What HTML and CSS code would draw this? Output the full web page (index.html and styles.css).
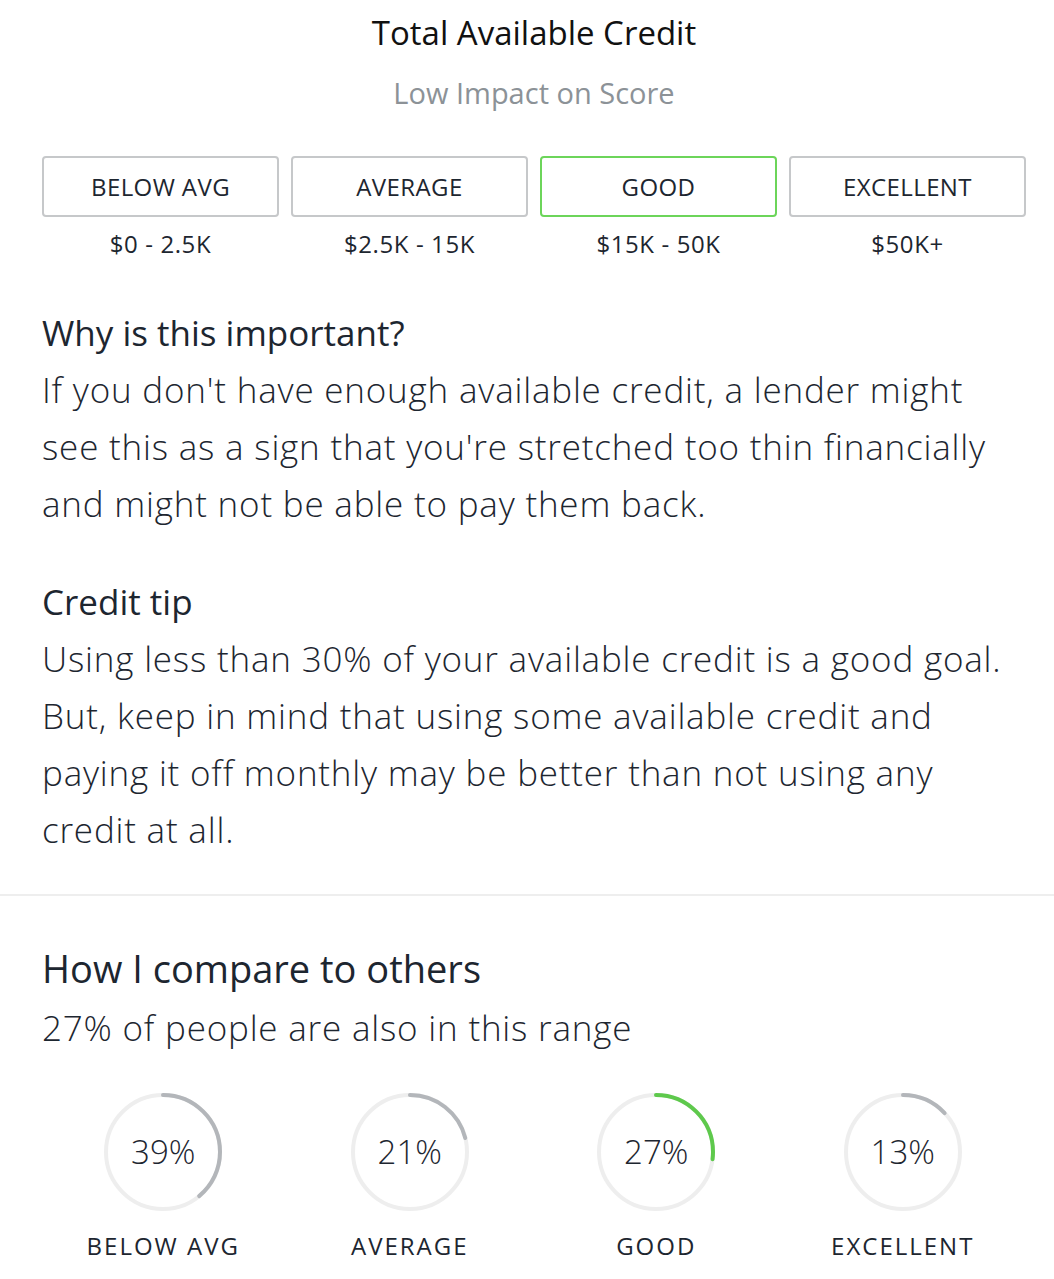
FILE: index.html
```html
<!doctype html>
<html>
<head>
<meta charset="utf-8">
<title>Total Available Credit</title>
<link rel="stylesheet" href="styles.css">
</head>
<body>
	<div class="page">
		<div class="head">
			<h1 class="title">Total Available Credit</h1>
			<div class="impact">Low Impact on Score</div>
		</div>

		<div class="ranges">
			<div class="range">
				<div class="range-box">BELOW AVG</div>
				<div class="range-val">$0 - 2.5K</div>
			</div>
			<div class="range">
				<div class="range-box">AVERAGE</div>
				<div class="range-val">$2.5K - 15K</div>
			</div>
			<div class="range">
				<div class="range-box active">GOOD</div>
				<div class="range-val">$15K - 50K</div>
			</div>
			<div class="range">
				<div class="range-box">EXCELLENT</div>
				<div class="range-val">$50K+</div>
			</div>
		</div>

		<div class="block">
			<h2 class="block-title">Why is this important?</h2>
			<p class="block-text">If you don't have enough available credit, a lender might see this as a sign that you're stretched too thin financially and might not be able to pay them back.</p>
		</div>

		<div class="block">
			<h2 class="block-title">Credit tip</h2>
			<p class="block-text">Using less than 30% of your available credit is a good goal. But, keep in mind that using some available credit and paying it off monthly may be better than not using any credit at all.</p>
		</div>
	</div>

	<hr class="divider">

	<div class="page">
		<h2 class="compare-title">How I compare to others</h2>
		<p class="compare-sub">27% of people are also in this range</p>

		<div class="rings">
			<div class="ring">
				<div class="ring-chart">
					<svg width="122" height="122" viewBox="0 0 122 122">
						<circle cx="61" cy="61" r="57" class="track"/>
						<circle cx="61" cy="61" r="57" class="arc" stroke-dasharray="139.7 400" transform="rotate(-90 61 61)"/>
					</svg>
					<span class="ring-num">39%</span>
				</div>
				<div class="ring-label">BELOW AVG</div>
			</div>
			<div class="ring">
				<div class="ring-chart">
					<svg width="122" height="122" viewBox="0 0 122 122">
						<circle cx="61" cy="61" r="57" class="track"/>
						<circle cx="61" cy="61" r="57" class="arc" stroke-dasharray="75.2 400" transform="rotate(-90 61 61)"/>
					</svg>
					<span class="ring-num">21%</span>
				</div>
				<div class="ring-label">AVERAGE</div>
			</div>
			<div class="ring">
				<div class="ring-chart">
					<svg width="122" height="122" viewBox="0 0 122 122">
						<circle cx="61" cy="61" r="57" class="track"/>
						<circle cx="61" cy="61" r="57" class="arc green" stroke-dasharray="96.7 400" transform="rotate(-90 61 61)"/>
					</svg>
					<span class="ring-num">27%</span>
				</div>
				<div class="ring-label">GOOD</div>
			</div>
			<div class="ring">
				<div class="ring-chart">
					<svg width="122" height="122" viewBox="0 0 122 122">
						<circle cx="61" cy="61" r="57" class="track"/>
						<circle cx="61" cy="61" r="57" class="arc" stroke-dasharray="46.6 400" transform="rotate(-90 61 61)"/>
					</svg>
					<span class="ring-num">13%</span>
				</div>
				<div class="ring-label">EXCELLENT</div>
			</div>
		</div>
	</div>
</body>
</html>
```

FILE: styles.css
```css
*{
	margin: 0;
	padding: 0;
	box-sizing: border-box;
}
body{
	background: #fff;
	color: #1d2630;
	font-family: "Open Sans", "Noto Sans", sans-serif;
	font-weight: 300;
}
.page{
	padding: 0 28px 0 42px;
}
.head{
	text-align: center;
	padding-top: 13px;
}
.title{
	font-size: 33px;
	font-weight: 400;
	line-height: 40px;
	color: #111;
}
.impact{
	margin-top: 22px;
	font-size: 29px;
	font-weight: 400;
	line-height: 36px;
	color: #8c9297;
}
.ranges{
	display: grid;
	grid-template-columns: repeat(4, 1fr);
	gap: 12px;
	margin-top: 45px;
}
.range{
	text-align: center;
}
.range-box{
	height: 61px;
	border: 2px solid #c6c8ca;
	border-radius: 4px;
	font-size: 24px;
	font-weight: 400;
	letter-spacing: 0.4px;
	line-height: 57px;
	color: #1d2630;
}
.range-box.active{
	border-color: #6cd55a;
}
.range-val{
	margin-top: 12px;
	font-size: 24px;
	font-weight: 400;
	letter-spacing: 0.6px;
	line-height: 30px;
	color: #1d2630;
}
.block{
	margin-top: 45px;
}
.block + .block{
	margin-top: 41px;
}
.block-title{
	font-size: 35px;
	font-weight: 400;
	line-height: 57px;
	color: #1d2630;
}
.block-text{
	font-size: 35px;
	letter-spacing: 0.8px;
	line-height: 57px;
	color: #1d2630;
}
.divider{
	border: none;
	height: 2px;
	background: #eeeeee;
	margin-top: 36px;
}
.compare-title{
	margin-top: 44px;
	font-size: 38px;
	font-weight: 400;
	line-height: 57px;
	color: #1d2630;
}
.compare-sub{
	margin-top: 2px;
	font-size: 35px;
	letter-spacing: 0.8px;
	line-height: 57px;
	color: #1d2630;
}
.rings{
	display: grid;
	grid-template-columns: repeat(4, 1fr);
	margin-top: 35px;
	margin-left: -2px;
}
.ring{
	display: flex;
	flex-direction: column;
	align-items: center;
}
.ring-chart{
	position: relative;
	width: 122px;
	height: 122px;
}
.ring-chart svg{
	display: block;
}
.track{
	fill: none;
	stroke: #eeeeee;
	stroke-width: 4;
}
.arc{
	fill: none;
	stroke: #b3b6ba;
	stroke-width: 4;
	stroke-linecap: round;
}
.arc.green{
	stroke: #5ec94c;
}
.ring-num{
	position: absolute;
	left: 0;
	right: 0;
	top: 0;
	line-height: 122px;
	text-align: center;
	font-size: 33px;
	color: #1d2630;
}
.ring-label{
	margin-top: 18px;
	font-size: 24px;
	font-weight: 400;
	letter-spacing: 2px;
	line-height: 30px;
	color: #1d2630;
}
```
